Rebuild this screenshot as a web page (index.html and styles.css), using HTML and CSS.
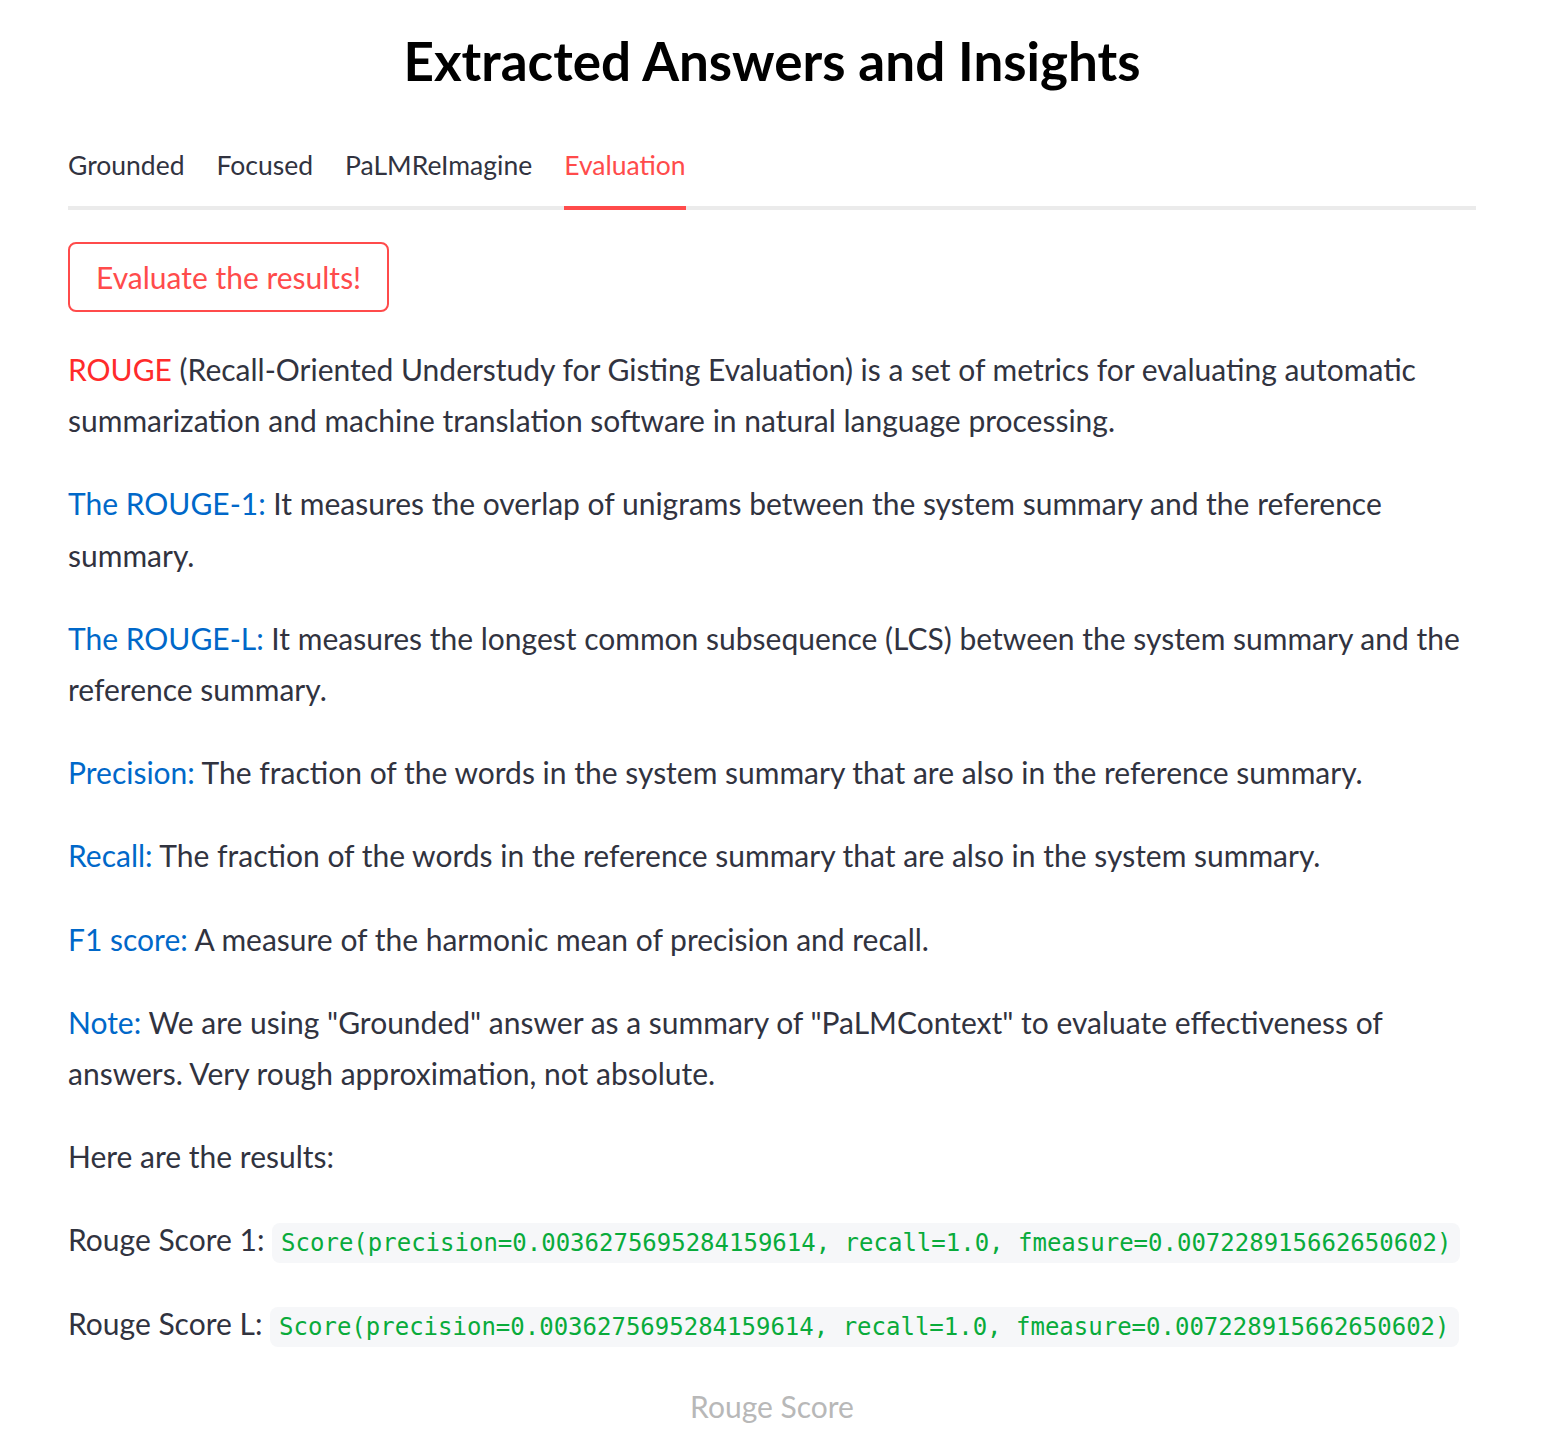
FILE: index.html
```html
<!DOCTYPE html>
<html lang="en">
<head>
<meta charset="utf-8">
<title>Extracted Answers and Insights</title>
<link rel="stylesheet" href="styles.css">
</head>
<body>
<main class="page">
  <h1 class="title">Extracted Answers and Insights</h1>

  <nav class="tabs">
    <div class="tab">Grounded</div>
    <div class="tab">Focused</div>
    <div class="tab">PaLMReImagine</div>
    <div class="tab active">Evaluation</div>
  </nav>

  <section class="panel">
    <button class="btn">Evaluate the results!</button>

    <p class="para"><span class="red">ROUGE</span> (Recall-Oriented Understudy for Gisting Evaluation) is a set of metrics for evaluating automatic<br>summarization and machine translation software in natural language processing.</p>

    <p class="para"><span class="blue">The ROUGE-1:</span> It measures the overlap of unigrams between the system summary and the reference<br>summary.</p>

    <p class="para"><span class="blue">The ROUGE-L:</span> It measures the longest common subsequence (LCS) between the system summary and the<br>reference summary.</p>

    <p class="para"><span class="blue">Precision:</span> The fraction of the words in the system summary that are also in the reference summary.</p>

    <p class="para"><span class="blue">Recall:</span> The fraction of the words in the reference summary that are also in the system summary.</p>

    <p class="para"><span class="blue">F1 score:</span> A measure of the harmonic mean of precision and recall.</p>

    <p class="para"><span class="blue">Note:</span> We are using "Grounded" answer as a summary of "PaLMContext" to evaluate effectiveness of<br>answers. Very rough approximation, not absolute.</p>

    <p class="para">Here are the results:</p>

    <p class="para nowrap">Rouge Score 1: <code class="code">Score(precision=0.0036275695284159614, recall=1.0, fmeasure=0.007228915662650602)</code></p>

    <p class="para nowrap">Rouge Score L: <code class="code">Score(precision=0.0036275695284159614, recall=1.0, fmeasure=0.007228915662650602)</code></p>

    <div class="chart-title">Rouge Score</div>
  </section>
</main>
</body>
</html>
```
FILE: styles.css
```css
html, body {
  margin: 0;
  padding: 0;
  background: #ffffff;
}

body {
  font-family: Lato, "Liberation Sans", sans-serif;
  color: #31333f;
}

.page {
  width: 1408px;
  margin-left: 68px;
  padding-top: 29px;
}

.title {
  margin: 0;
  font-size: 53px;
  line-height: 64px;
  font-weight: 700;
  color: #000000;
  text-align: center;
}

.tabs {
  display: flex;
  gap: 32px;
  margin-top: 52px;
  border-bottom: 4px solid #ebebeb;
}

.tab {
  font-size: 26.5px;
  line-height: 40px;
  padding-bottom: 21px;
  margin-bottom: -4px;
  border-bottom: 4px solid transparent;
  color: #31333f;
}

.tab.active {
  color: #ff4b4b;
  border-bottom-color: #ff4b4b;
}

.panel {
  padding-top: 32px;
}

.btn {
  display: block;
  height: 70px;
  padding: 0 26px;
  margin: 0 0 32px 0;
  background: #ffffff;
  border: 2px solid #ff4b4b;
  border-radius: 8px;
  font-family: Lato, "Liberation Sans", sans-serif;
  font-size: 30px;
  color: #ff4b4b;
}

.para {
  margin: 0 0 32px 0;
  font-size: 30px;
  line-height: 51.2px;
}

.nowrap {
  white-space: nowrap;
}

.red {
  color: #ff2b2b;
}

.blue {
  color: #0068c9;
}

.code {
  font-family: "DejaVu Sans Mono", "Liberation Mono", monospace;
  font-size: 24px;
  line-height: 1;
  color: #09ab3b;
  background: #f6f7f9;
  border-radius: 8px;
  padding: 6px 9px;
}

.chart-title {
  text-align: center;
  font-size: 30px;
  line-height: 51px;
  color: #b8b8b8;
}
```
